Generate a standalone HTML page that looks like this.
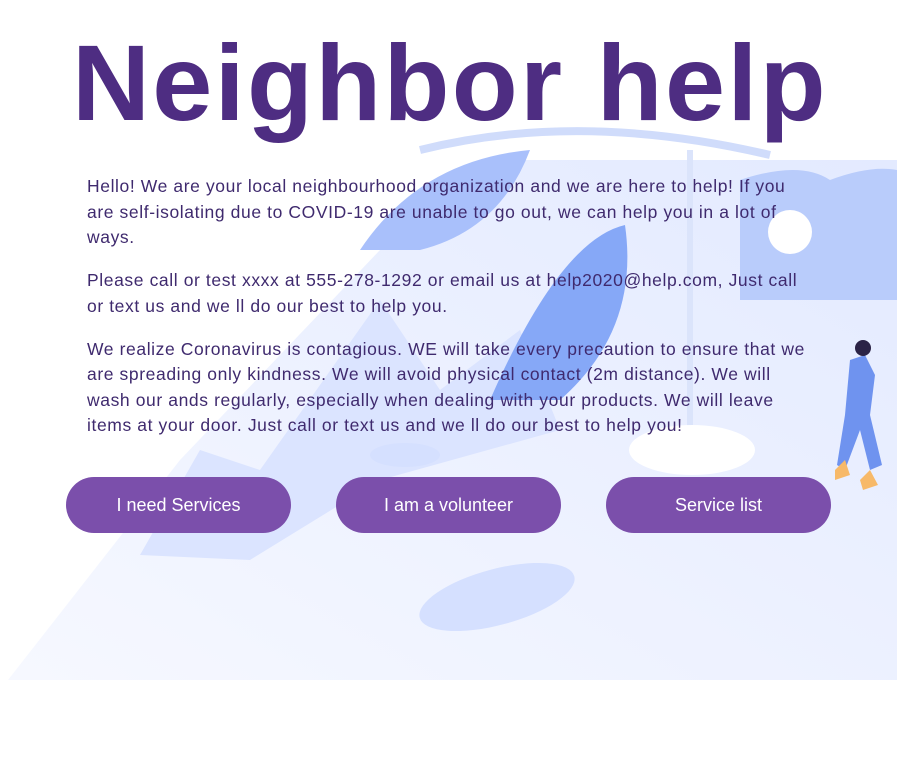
<!DOCTYPE html>
<html><head><meta charset="utf-8"><style>
html,body{margin:0;padding:0;width:897px;height:782px;overflow:hidden;background:#fff;font-family:"Comic Sans MS","Liberation Sans",sans-serif}
.bg{position:absolute;left:0;top:0}
h1{position:absolute;left:72px;top:18px;margin:0;font:bold 108px/1.2 "Comic Sans MS","Liberation Sans",sans-serif;color:#4e2d82;letter-spacing:2.3px;white-space:nowrap}
.txt{position:absolute;left:87px;top:174px;width:780px;color:#3f2a6e;font-size:17.5px;line-height:25.5px;letter-spacing:0.6px;white-space:nowrap}
.txt p{margin:0 0 17.5px}
.btn{position:absolute;top:477px;width:225px;height:56px;border-radius:28px;background:#7b4fab;color:#fff;font:18px/56px "Liberation Sans",sans-serif;text-align:center}
</style></head><body>
<svg class="bg" width="897" height="782" viewBox="0 0 897 782">
<defs><linearGradient id="g" x1="0" y1="1" x2="1" y2="0"><stop offset="0" stop-color="#f6f8ff"/><stop offset="1" stop-color="#e3eaff"/></linearGradient></defs>
<path d="M8 680 L180 460 L380 250 L520 160 L897 160 L897 680 Z" fill="url(#g)"/>
<path d="M140 555 L200 450 L260 470 L380 300 L440 390 L520 330 L560 430 L380 480 L250 560Z" fill="#dbe4ff"/>
<path d="M360 250 Q420 160 530 150 Q500 230 420 250Z" fill="#a9c0fb"/>
<path d="M490 400 Q560 240 625 225 Q640 330 560 400Z" fill="#86a8f7"/>
<path d="M420 150 Q580 110 770 155" stroke="#d0dcfb" stroke-width="8" fill="none"/>
<path d="M690 150 L690 440" stroke="#dbe4fb" stroke-width="6"/>
<path d="M740 180 Q800 160 830 180 Q870 165 897 170 L897 300 L740 300Z" fill="#b9ccfb"/>
<circle cx="790" cy="232" r="22" fill="#fff"/>
<ellipse cx="692" cy="450" rx="63" ry="25" fill="#fff"/>
<ellipse cx="497" cy="597" rx="80" ry="28" fill="#d5e0ff" transform="rotate(-15 497 597)"/>
<ellipse cx="405" cy="455" rx="35" ry="12" fill="#d5e0ff"/>
<path d="M850 360 l15 -5 l10 20 l-5 40 l12 50 l-12 5 l-10 -40 l-15 40 l-8 -5 l8 -50Z" fill="#6f93ef"/>
<circle cx="863" cy="348" r="8" fill="#2b2346"/>
<path d="M835 470 l10 -10 l5 15 l-15 5Z M860 480 l10 -10 l8 15 l-15 5Z" fill="#f7b969"/>
</svg>
<h1>Neighbor help</h1>
<div class="txt">
<p>Hello! We are your local neighbourhood organization and we are here to help! If you<br>are self-isolating due to COVID-19 are unable to go out, we can help you in a lot of<br>ways.</p>
<p>Please call or test xxxx at 555-278-1292 or email us at help2020@help.com, Just call<br>or text us and we ll do our best to help you.</p>
<p>We realize Coronavirus is contagious. WE will take every precaution to ensure that we<br>are spreading only kindness. We will avoid physical contact (2m distance). We will<br>wash our ands regularly, especially when dealing with your products. We will leave<br>items at your door. Just call or text us and we ll do our best to help you!</p>
</div>
<div class="btn" style="left:66px">I need Services</div>
<div class="btn" style="left:336px">I am a volunteer</div>
<div class="btn" style="left:606px">Service list</div>
</body></html>
